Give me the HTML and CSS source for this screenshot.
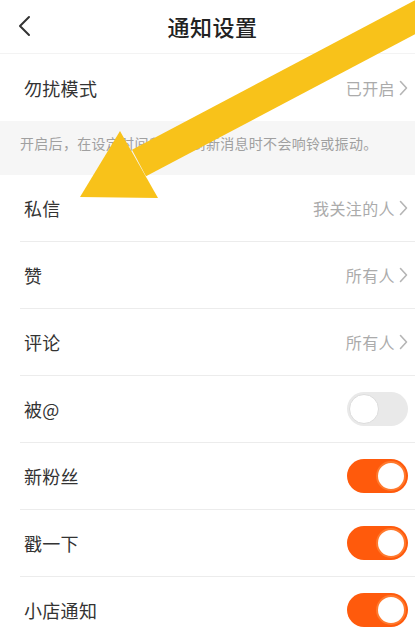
FILE: index.html
```html
<!DOCTYPE html>
<html lang="zh-CN">
<head>
<meta charset="utf-8">
<title>通知设置</title>
<link rel="stylesheet" href="styles.css">
</head>
<body>
<div class="screen">
  <header class="nav">
    <div class="nav-left">
      <svg class="back" width="14" height="22" viewBox="0 0 14 22"><path d="M12 2 L3 11 L12 20" fill="none" stroke="#333" stroke-width="2" stroke-linecap="round" stroke-linejoin="round"/></svg>
    </div>
    <h1 class="title">通知设置</h1>
    <div class="nav-right"></div>
  </header>

  <div class="row row-first">
    <span class="label">勿扰模式</span>
    <span class="value">已开启<svg class="chev" width="9" height="16" viewBox="0 0 9 16"><path d="M1.5 1.5 L7.5 8 L1.5 14.5" fill="none" stroke="#b5b5b5" stroke-width="1.6" stroke-linecap="round" stroke-linejoin="round"/></svg></span>
  </div>
  <div class="desc">开启后，在设定时间段内收到新消息时不会响铃或振动。</div>

  <div class="list">
    <div class="row">
      <span class="label">私信</span>
      <span class="value">我关注的人<svg class="chev" width="9" height="16" viewBox="0 0 9 16"><path d="M1.5 1.5 L7.5 8 L1.5 14.5" fill="none" stroke="#b5b5b5" stroke-width="1.6" stroke-linecap="round" stroke-linejoin="round"/></svg></span>
    </div>
    <div class="row">
      <span class="label">赞</span>
      <span class="value">所有人<svg class="chev" width="9" height="16" viewBox="0 0 9 16"><path d="M1.5 1.5 L7.5 8 L1.5 14.5" fill="none" stroke="#b5b5b5" stroke-width="1.6" stroke-linecap="round" stroke-linejoin="round"/></svg></span>
    </div>
    <div class="row">
      <span class="label">评论</span>
      <span class="value">所有人<svg class="chev" width="9" height="16" viewBox="0 0 9 16"><path d="M1.5 1.5 L7.5 8 L1.5 14.5" fill="none" stroke="#b5b5b5" stroke-width="1.6" stroke-linecap="round" stroke-linejoin="round"/></svg></span>
    </div>
    <div class="row">
      <span class="label">被@</span>
      <span class="toggle"><span class="knob"></span></span>
    </div>
    <div class="row">
      <span class="label">新粉丝</span>
      <span class="toggle on"><span class="knob"></span></span>
    </div>
    <div class="row">
      <span class="label">戳一下</span>
      <span class="toggle on"><span class="knob"></span></span>
    </div>
    <div class="row">
      <span class="label">小店通知</span>
      <span class="toggle on"><span class="knob"></span></span>
    </div>
  </div>

  <svg class="arrow" width="415" height="630" viewBox="0 0 415 630">
    <line x1="139" y1="163" x2="440" y2="4" stroke="#f8c21a" stroke-width="30"/>
    <polygon points="80,197 120,131 158,198" fill="#f8c21a"/>
  </svg>
</div>
</body>
</html>
```

FILE: styles.css
```css
html, body {
  margin: 0;
  padding: 0;
  background: #ffffff;
}

body {
  font-family: "Noto Sans CJK SC", "Noto Sans", sans-serif;
  color: #333333;
}

.screen {
  position: relative;
  width: 415px;
  height: 630px;
  overflow: hidden;
  background: #ffffff;
}

.nav {
  height: 54px;
  display: grid;
  grid-template-columns: 1fr auto 1fr;
  align-items: center;
  border-bottom: 1px solid #f3f3f3;
  box-sizing: border-box;
}

.nav-left {
  padding-left: 17px;
  display: flex;
  align-items: center;
}

.back {
  display: block;
  margin-top: -2px;
}

.title {
  margin: 0;
  font-size: 22px;
  font-weight: 500;
  color: #222222;
  letter-spacing: 0.5px;
  margin-top: -2px;
  padding-left: 10px;
}

.row {
  height: 66px;
  display: flex;
  align-items: center;
  justify-content: space-between;
  padding: 0 7px 0 4px;
  border-bottom: 1px solid #ececec;
}

.row-first {
  height: 67px;
  padding-left: 24px;
  border-bottom: none;
}

.list {
  margin-left: 20px;
}

.label {
  font-size: 18px;
  color: #333333;
  letter-spacing: 0.3px;
}

.value {
  display: flex;
  align-items: center;
  font-size: 16px;
  color: #ababab;
  letter-spacing: 0.4px;
}

.chev {
  display: block;
  margin-left: 4px;
}

.desc {
  height: 54px;
  box-sizing: border-box;
  background: #f6f6f6;
  padding: 12px 0 0 20px;
  font-size: 14px;
  color: #a0a0a0;
  line-height: 20px;
  letter-spacing: 0.3px;
}

.toggle {
  position: relative;
  width: 61px;
  height: 34px;
  border-radius: 17px;
  background: #e9e9e9;
  box-sizing: border-box;
  flex: none;
}

.knob {
  position: absolute;
  top: 2px;
  left: 2px;
  width: 30px;
  height: 30px;
  border-radius: 50%;
  background: #ffffff;
  box-sizing: border-box;
  border: 1px solid #dcdcdc;
}

.toggle.on {
  background: #ff5a0c;
}

.toggle.on .knob {
  left: auto;
  right: 2px;
  border: 2px solid #ff7a2e;
}

.arrow {
  position: absolute;
  top: 0;
  left: 0;
  pointer-events: none;
}
```
